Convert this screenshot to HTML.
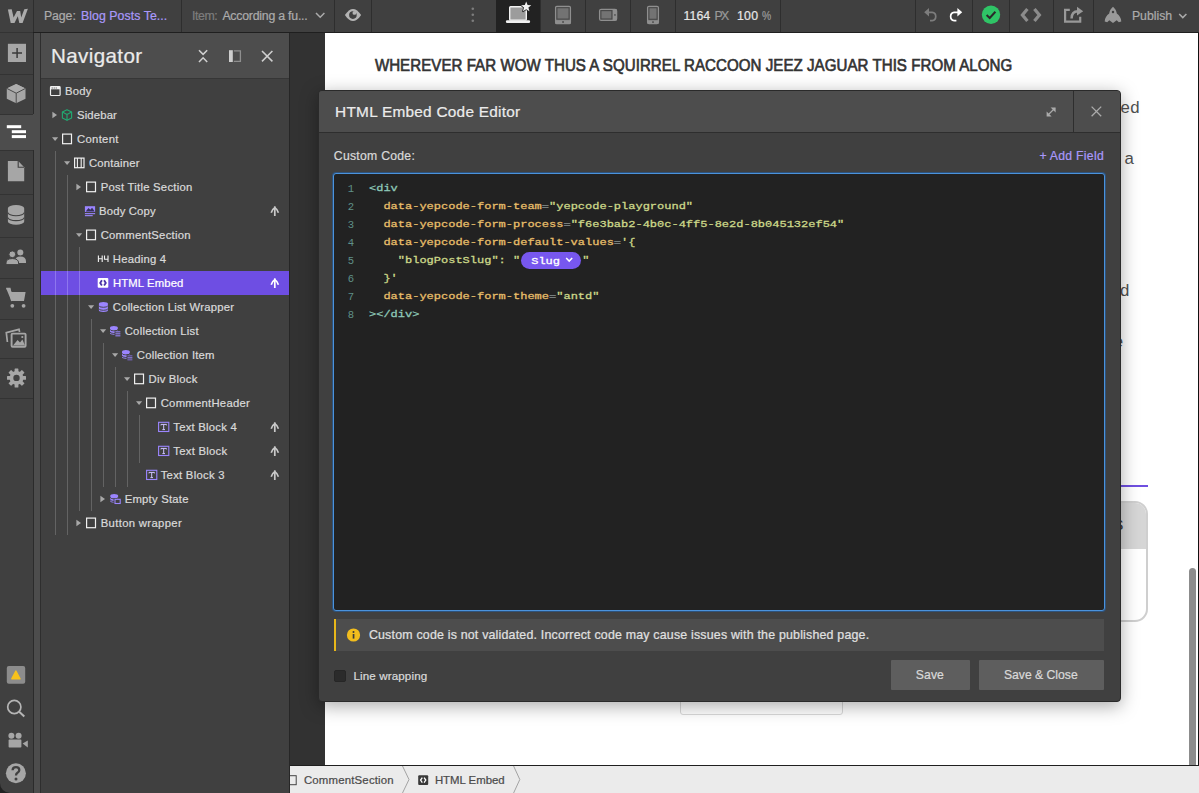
<!DOCTYPE html>
<html><head><meta charset="utf-8"><style>
*{box-sizing:border-box;margin:0;padding:0}
html,body{width:1199px;height:793px;overflow:hidden;background:#323232;font-family:"Liberation Sans",sans-serif}
body{position:relative}
.a{position:absolute}
.t{position:absolute;white-space:pre;line-height:20px;height:20px;-webkit-text-stroke:0.22px}
#page .t{-webkit-text-stroke:0}
svg{position:absolute;left:0;top:0;overflow:visible}
#topbar{position:absolute;left:0;top:0;width:1199px;height:33px;background:#404040;border-bottom:1px solid #1f1f1f}
.sep{position:absolute;top:0;width:1px;height:32px;background:#2e2e2e}
#rail{position:absolute;left:0;top:32px;width:34px;height:761px;background:#404040;border-right:1px solid #2b2b2b}
.rdiv{position:absolute;left:0;width:33px;height:1px;background:#333}
#strip{position:absolute;left:34px;top:32px;width:6px;height:761px;background:#4d4d4d}
#stripb{position:absolute;left:40px;top:32px;width:1px;height:761px;background:#2e2e2e}
#nav{position:absolute;left:41px;top:32px;width:248px;height:761px;background:#404040}
#navedge{position:absolute;left:289px;top:32px;width:1px;height:761px;background:#262626}
#navhead{position:absolute;left:0;top:1px;width:248px;height:45.5px;background:#4d4d4d;border-bottom:1px solid #363636}
.sel{position:absolute;left:41px;top:271px;width:248px;height:24px;background:#6e4ee3}
.guide{position:absolute;width:1px;background:#636363}
#page{position:absolute;left:325px;top:32px;width:873px;height:733px;background:#fff;overflow:hidden}
#pedge{position:absolute;left:1198px;top:32px;width:1px;height:761px;background:#111}
#crumbs{position:absolute;left:290px;top:765px;width:909px;height:28px;background:#ebebeb;border-top:1px solid #1f1f1f}
#modal{position:absolute;left:318px;top:90px;width:803px;height:612px;background:#404040;border-radius:4px;border:1px solid #2a2a2a;box-shadow:0 4px 18px rgba(0,0,0,.34)}
#mhead{position:absolute;left:0;top:0;width:801px;height:42px;background:#4d4d4d;border-bottom:1px solid #2e2e2e;border-radius:3px 3px 0 0}
#code{position:absolute;left:333px;top:173px;width:772px;height:438px;background:#222;border:1px solid #4b93dc;border-radius:3px;box-shadow:0 0 0 1px rgba(30,100,180,.5)}
.ln{position:absolute;left:340px;width:14px;text-align:right;font-family:"Liberation Mono",monospace;font-size:10.6px;color:#5f9088;line-height:18px;height:18px;transform:scaleY(1.04);transform-origin:0 11.83px}
.cl{position:absolute;font-family:"Liberation Mono",monospace;font-size:12px;font-weight:normal;-webkit-text-stroke:0.35px;transform:scaleY(0.75);transform-origin:0 12.2px;line-height:18px;height:18px;white-space:pre;color:#e8bf6a}
.cl i{font-style:normal}
.tg{color:#8ec9b8}.eq{color:#8c9494}.st{color:#cdd98a}
#notice{position:absolute;left:334px;top:619px;width:770px;height:32px;background:#4d4d4d;border-left:2px solid #e8b71a}
.btn{position:absolute;top:660px;height:30px;background:#5e5e5e;border-radius:1px}
#pill{position:absolute;left:520.5px;top:252px;width:60.5px;height:16.5px;border-radius:9px;background:#7757ee}
</style></head><body>
<div id="page">
<div class="t" style="left:795.6px;top:66px;font-size:16.8px;color:#505050;letter-spacing:.2px">ed</div>
<div class="t" style="left:799.4px;top:117px;font-size:16.8px;color:#505050">a</div>
<div class="t" style="left:795px;top:249px;font-size:16.8px;color:#505050">d</div>
<div class="t" style="left:780.3px;top:300px;font-size:16.8px;color:#505050">ce</div>
<div class="a" style="left:0;top:452.7px;width:823px;height:2px;background:#6f4fe0"></div>
<div class="a" style="left:500px;top:469px;width:323px;height:121px;border:2px solid #cfcfcf;border-radius:13px;overflow:hidden"><div style="height:45.5px;background:#d6d6d6"></div></div>
<div class="t" style="left:789.6px;top:482px;font-size:17.5px;color:#3a3a3a">s</div>
<div class="a" style="left:355px;top:640px;width:163px;height:43px;border:1px solid #d9d9d9;border-radius:3px"></div>
<div class="a" style="left:458.5px;top:664px;width:1.2px;height:6px;background:#444"></div>
<div class="a" style="left:864px;top:536px;width:7px;height:200px;border-radius:4px;background:#8c8c8c"></div>
</div>
<div id="pedge"></div>
<div id="crumbs"></div>
<svg width="1199" height="793"><g fill="none" stroke="#a3a3a3" stroke-width="1"><path d="M402.5,766 L409,779.5 L402.5,793"/><path d="M513.6,766 L519.8,779.5 L513.6,793"/></g><rect x="289.2" y="775.7" width="7" height="9" fill="none" stroke="#444" stroke-width="1"/><rect x="418.2" y="775.2" width="10" height="9.8" rx="1" fill="#3a3a3a"/><path d="M422.3,777.6 L420.6,780.1 L422.3,782.6 M424.1,777.6 L425.8,780.1 L424.1,782.6" stroke="#fff" stroke-width="1.3" fill="none"/></svg>
<div id="rail"></div><div id="strip"></div><div id="stripb"></div>
<div class="a" style="left:0;top:114px;width:40px;height:36px;background:#4d4d4d"></div>
<div class="rdiv" style="top:74px"></div>
<div class="rdiv" style="top:113.5px"></div>
<div class="rdiv" style="top:150px"></div>
<div class="rdiv" style="top:194px"></div>
<div class="rdiv" style="top:237px"></div>
<div class="rdiv" style="top:278px"></div>
<div class="rdiv" style="top:319px"></div>
<div class="rdiv" style="top:358px"></div>
<div class="rdiv" style="top:398px"></div>
<svg width="1199" height="793"><rect x="7.9" y="43.8" width="18.1" height="18.2" fill="#a6a6a6"/><path d="M12.1,52.95 H22 M17.1,47.9 V58" stroke="#3a3a3a" stroke-width="1.5"/><path d="M16.2,84 L25.5,88.4 V98.8 L16.2,103.3 L6.8,98.8 V88.4 Z" fill="#a6a6a6"/><path d="M16.2,84 L25.5,88.4 L16.2,93.2 L6.8,88.4 Z" fill="#adadad"/><path d="M6.8,88.4 L16.2,93.2 L25.5,88.4 M16.2,93.2 V103.3" stroke="#4a4a4a" stroke-width="1" fill="none"/><rect x="6.8" y="125.2" width="14.4" height="3" fill="#fff"/><rect x="11.8" y="130.2" width="14.2" height="3" fill="#fff"/><rect x="11.8" y="135.1" width="14.2" height="3" fill="#fff"/><path d="M7.9,161 H18.2 L24.2,167.2 V181.2 H7.9 Z" fill="#a6a6a6"/><path d="M18.2,161 V167.2 H24.2" stroke="#404040" stroke-width="1.1" fill="none"/><path d="M7.9,208.2 A8.15,3.2 0 0 1 24.2,208.2 V221.6 A8.15,3.2 0 0 1 7.9,221.6 Z" fill="#a6a6a6"/><path d="M7.9,212.6 A8.15,3.2 0 0 0 24.2,212.6 M7.9,217.4 A8.15,3.2 0 0 0 24.2,217.4" stroke="#404040" stroke-width="1.1" fill="none"/><circle cx="20.3" cy="252.4" r="3" fill="#a6a6a6"/><path d="M15,263 V261.6 Q15,256.6 20.3,256.6 Q26,256.6 26,261.6 V263 Z" fill="#a6a6a6"/><circle cx="12.3" cy="254.3" r="3.4" fill="#a6a6a6" stroke="#404040" stroke-width="1"/><path d="M6,264.6 V263 Q6,258.6 12.3,258.6 Q18.6,258.6 18.6,263 V264.6 Z" fill="#a6a6a6" stroke="#404040" stroke-width="1"/><path d="M6.2,288.5 H10.2 L11.6,292 H25.6 L24,301 H11.4 Z" fill="#a6a6a6"/><path d="M6.2,288.5 H9.8 L11.8,301" stroke="#a6a6a6" stroke-width="1.6" fill="none"/><circle cx="12.3" cy="305.8" r="1.9" fill="#a6a6a6"/><circle cx="23.6" cy="305.8" r="1.9" fill="#a6a6a6"/><path d="M7.4,342 L6.3,332.6 L19,329.4 L19.6,332" stroke="#a6a6a6" stroke-width="1.7" fill="none"/><rect x="11.6" y="333.6" width="14" height="13.2" rx="1" fill="none" stroke="#a6a6a6" stroke-width="1.9"/><path d="M13,345.6 L17.6,340 L20,342.6 L22.4,339.6 L25,345.6 Z" fill="#a6a6a6"/><circle cx="22.3" cy="337" r="1.1" fill="#a6a6a6"/><rect x="14.6" y="368.4" width="3.8" height="19" rx="0.5" fill="#a6a6a6" transform="rotate(0 16.5 377.9)"/><rect x="14.6" y="368.4" width="3.8" height="19" rx="0.5" fill="#a6a6a6" transform="rotate(45 16.5 377.9)"/><rect x="14.6" y="368.4" width="3.8" height="19" rx="0.5" fill="#a6a6a6" transform="rotate(90 16.5 377.9)"/><rect x="14.6" y="368.4" width="3.8" height="19" rx="0.5" fill="#a6a6a6" transform="rotate(135 16.5 377.9)"/><circle cx="16.5" cy="377.9" r="6.9" fill="#a6a6a6"/><circle cx="16.5" cy="377.9" r="3.2" fill="#404040"/><rect x="6.8" y="666.1" width="18.4" height="17.7" rx="2" fill="#8c8c8c"/><path d="M15.9,671 L20,678.8 H11.8 Z" fill="#f8c21c" stroke="#f8c21c" stroke-width="1.4" stroke-linejoin="round"/><circle cx="14.3" cy="707" r="6.6" fill="none" stroke="#b5b5b5" stroke-width="1.7"/><path d="M19.2,711.8 L24.3,716.6" stroke="#b5b5b5" stroke-width="2"/><circle cx="11.4" cy="735.8" r="3" fill="#a6a6a6"/><circle cx="18.6" cy="735.8" r="3" fill="#a6a6a6"/><rect x="8.6" y="739.6" width="12.8" height="8" rx="0.8" fill="#a6a6a6"/><path d="M22.6,743.6 L27.8,740.6 V747.4 Z" fill="#a6a6a6"/><circle cx="15.9" cy="773.2" r="10" fill="#a6a6a6"/><path d="M12.6,770.3 Q12.6,767.2 16,767.2 Q19.3,767.2 19.3,770 Q19.3,771.8 17.5,772.8 Q16,773.7 16,775.6" fill="none" stroke="#404040" stroke-width="2.3"/><circle cx="16" cy="779" r="1.5" fill="#404040"/></svg>
<div id="nav"><div id="navhead"></div></div><div id="navedge"></div>
<div class="sel"></div>
<div class="guide" style="left:55.0px;top:151px;height:384px"></div>
<div class="guide" style="left:55.0px;top:271px;height:24px;background:#8e76ee"></div>
<div class="guide" style="left:67.0px;top:175px;height:360px"></div>
<div class="guide" style="left:67.0px;top:271px;height:24px;background:#8e76ee"></div>
<div class="guide" style="left:79.0px;top:247px;height:264px"></div>
<div class="guide" style="left:79.0px;top:271px;height:24px;background:#8e76ee"></div>
<div class="guide" style="left:91.0px;top:319px;height:192px"></div>
<div class="guide" style="left:103.0px;top:343px;height:144px"></div>
<div class="guide" style="left:115.0px;top:367px;height:120px"></div>
<div class="guide" style="left:127.0px;top:391px;height:96px"></div>
<div class="guide" style="left:139.0px;top:415px;height:48px"></div>
<svg width="1199" height="793"><g fill="none" stroke="#cfcfcf" stroke-width="1.55"><path d="M199,50.2 L203.1,54.4 L207.2,50.2 M199,62 L203.1,57.8 L207.2,62"/><path d="M262,51 L272.4,61.4 M272.4,51 L262,61.4"/></g><rect x="229" y="50.2" width="3.8" height="11.8" fill="#cfcfcf"/><path d="M233.8,50.8 H240.4 V61.4 H233.8" fill="none" stroke="#8f8f8f" stroke-width="1.3"/></svg>
<svg width="1199" height="793"><rect x="50.5" y="86.7" width="9.6" height="8.8" rx="0.8" fill="none" stroke="#f0f0f0" stroke-width="1.2"/><rect x="50.5" y="86.7" width="9.6" height="2.6" fill="#f0f0f0"/><rect x="51.7" y="87.5" width="1" height="1" fill="#404040"/><rect x="53.7" y="87.5" width="1" height="1" fill="#404040"/><rect x="55.7" y="87.5" width="1" height="1" fill="#404040"/><path d="M52.4,111.7 L57.0,115 L52.4,118.3 Z" fill="#a8a8a8"/><g fill="none" stroke="#22a871" stroke-width="1.15" stroke-linejoin="round"><path d="M67,109.8 L71.6,112.1 V117.9 L67,120.3 L62.4,117.9 V112.1 Z"/><path d="M62.4,112.1 L67,114.5 L71.6,112.1 M67,114.5 V120.3"/></g><path d="M52,137.2 L58.2,137.2 L55.1,141 Z" fill="#a8a8a8"/><rect x="62.6" y="134.1" width="8.9" height="9.6" fill="none" stroke="#f0f0f0" stroke-width="1.2"/><path d="M64,161.2 L70.2,161.2 L67.1,165 Z" fill="#a8a8a8"/><rect x="74.6" y="158.1" width="9.4" height="9.6" fill="none" stroke="#f0f0f0" stroke-width="1.2"/><path d="M77.4,158.1 V167.7 M81.2,158.1 V167.7" stroke="#f0f0f0" stroke-width="1.1"/><path d="M76.4,183.7 L81.0,187 L76.4,190.3 Z" fill="#a8a8a8"/><rect x="86.6" y="182.1" width="8.9" height="9.6" fill="none" stroke="#f0f0f0" stroke-width="1.2"/><rect x="84.9" y="206.2" width="10.2" height="5.8" fill="#9b85ff"/><path d="M85.7,211.4 L88.5,208 L90.3,209.8 L92.1,207.8 L94.7,211.4 Z" fill="#35305a"/><rect x="84.9" y="213.1" width="10.2" height="1.1" fill="#9b85ff"/><rect x="84.9" y="215.1" width="7.8" height="1.1" fill="#9b85ff"/><g fill="none" stroke="#c9c9c9" stroke-width="1.7"><path d="M274.8,206.3 V216"/><path d="M271.2,212.7 Q272.2,209.4 274.8,207.8 Q277.40000000000003,209.4 278.40000000000003,212.7"/></g><path d="M76,233.2 L82.2,233.2 L79.1,237 Z" fill="#a8a8a8"/><rect x="86.6" y="230.1" width="8.9" height="9.6" fill="none" stroke="#f0f0f0" stroke-width="1.2"/><g fill="none" stroke="#f2f2f2" stroke-width="1.1"><path d="M98.4,255.5 V262.1 M102.2,255.5 V262.1 M98.4,258.8 H102.2"/><path d="M104.5,255.5 V259.2 H108 M108,255.5 V262.1"/></g><rect x="97.7" y="278" width="10.6" height="9.8" rx="1" fill="#fff"/><path d="M101.9,280.2 L100.2,282.9 L101.9,285.6 M104.1,280.2 L105.8,282.9 L104.1,285.6" stroke="#4a32a8" stroke-width="1.8" fill="none"/><g fill="none" stroke="#fff" stroke-width="1.7"><path d="M274.8,278.3 V288"/><path d="M271.2,284.7 Q272.2,281.4 274.8,279.8 Q277.40000000000003,281.4 278.40000000000003,284.7"/></g><path d="M88,305.2 L94.2,305.2 L91.1,309 Z" fill="#a8a8a8"/><path d="M98.9,303.7 A4.5,1.7 0 0 1 107.9,303.7 V310.3 A4.5,1.7 0 0 1 98.9,310.3 Z" fill="#9b85ff"/><path d="M98.9,305.6 A4.5,1.7 0 0 0 107.9,305.6" fill="none" stroke="#404040" stroke-width="0.9"/><path d="M98.9,308.6 A4.5,1.7 0 0 0 107.9,308.6" fill="none" stroke="#404040" stroke-width="0.9"/><path d="M100,329.2 L106.2,329.2 L103.1,333 Z" fill="#a8a8a8"/><path d="M110.0,327.79999999999995 A3.9,1.7 0 0 1 117.80000000000001,327.79999999999995 V333.0 A3.9,1.7 0 0 1 110.0,333.0 Z" fill="#9b85ff"/><path d="M110.0,329.19599999999997 A3.9,1.7 0 0 0 117.80000000000001,329.19599999999997" fill="none" stroke="#404040" stroke-width="0.9"/><path d="M110.0,331.77599999999995 A3.9,1.7 0 0 0 117.80000000000001,331.77599999999995" fill="none" stroke="#404040" stroke-width="0.9"/><rect x="114.6" y="330.4" width="6" height="5.8" fill="#404040"/><rect x="115.4" y="331.3" width="5" height="1.05" fill="#9b85ff"/><rect x="115.4" y="333.3" width="5" height="1.05" fill="#9b85ff"/><rect x="115.4" y="335.3" width="5" height="1.05" fill="#9b85ff"/><path d="M112,353.2 L118.2,353.2 L115.1,357 Z" fill="#a8a8a8"/><path d="M122.0,351.79999999999995 A3.9,1.7 0 0 1 129.8,351.79999999999995 V357.0 A3.9,1.7 0 0 1 122.0,357.0 Z" fill="#9b85ff"/><path d="M122.0,353.19599999999997 A3.9,1.7 0 0 0 129.8,353.19599999999997" fill="none" stroke="#404040" stroke-width="0.9"/><path d="M122.0,355.77599999999995 A3.9,1.7 0 0 0 129.8,355.77599999999995" fill="none" stroke="#404040" stroke-width="0.9"/><rect x="126.6" y="354.4" width="6" height="5.8" fill="#404040"/><rect x="127.4" y="355.3" width="5" height="1.05" fill="#7a68c8"/><rect x="127.4" y="357.3" width="5" height="1.05" fill="#9b85ff"/><rect x="127.4" y="359.3" width="5" height="1.05" fill="#7a68c8"/><path d="M124,377.2 L130.2,377.2 L127.1,381 Z" fill="#a8a8a8"/><rect x="134.6" y="374.1" width="8.9" height="9.6" fill="none" stroke="#f0f0f0" stroke-width="1.2"/><path d="M136,401.2 L142.2,401.2 L139.1,405 Z" fill="#a8a8a8"/><rect x="146.6" y="398.1" width="8.9" height="9.6" fill="none" stroke="#f0f0f0" stroke-width="1.2"/><rect x="158.6" y="422.3" width="10.2" height="9.2" fill="none" stroke="#9b85ff" stroke-width="1.1"/><path d="M161,425.4 V424.4 H166.4 V425.4 M163.7,424.4 V429.6 M162.4,429.6 H165" stroke="#cfc4ff" stroke-width="1" fill="none"/><g fill="none" stroke="#c9c9c9" stroke-width="1.7"><path d="M274.8,422.3 V432"/><path d="M271.2,428.7 Q272.2,425.4 274.8,423.8 Q277.40000000000003,425.4 278.40000000000003,428.7"/></g><rect x="158.6" y="446.3" width="10.2" height="9.2" fill="none" stroke="#9b85ff" stroke-width="1.1"/><path d="M161,449.4 V448.4 H166.4 V449.4 M163.7,448.4 V453.6 M162.4,453.6 H165" stroke="#cfc4ff" stroke-width="1" fill="none"/><g fill="none" stroke="#c9c9c9" stroke-width="1.7"><path d="M274.8,446.3 V456"/><path d="M271.2,452.7 Q272.2,449.4 274.8,447.8 Q277.40000000000003,449.4 278.40000000000003,452.7"/></g><rect x="146.6" y="470.3" width="10.2" height="9.2" fill="none" stroke="#9b85ff" stroke-width="1.1"/><path d="M149,473.4 V472.4 H154.4 V473.4 M151.7,472.4 V477.6 M150.4,477.6 H153" stroke="#cfc4ff" stroke-width="1" fill="none"/><g fill="none" stroke="#c9c9c9" stroke-width="1.7"><path d="M274.8,470.3 V480"/><path d="M271.2,476.7 Q272.2,473.4 274.8,471.8 Q277.40000000000003,473.4 278.40000000000003,476.7"/></g><path d="M100.4,495.7 L105.0,499 L100.4,502.3 Z" fill="#a8a8a8"/><path d="M110.3,495.79999999999995 A3.9,1.7 0 0 1 118.10000000000001,495.79999999999995 V501.0 A3.9,1.7 0 0 1 110.3,501.0 Z" fill="#9b85ff"/><path d="M110.3,497.19599999999997 A3.9,1.7 0 0 0 118.10000000000001,497.19599999999997" fill="none" stroke="#404040" stroke-width="0.9"/><path d="M110.3,499.77599999999995 A3.9,1.7 0 0 0 118.10000000000001,499.77599999999995" fill="none" stroke="#404040" stroke-width="0.9"/><rect x="113.6" y="498.2" width="7.6" height="6.4" fill="#404040"/><rect x="115" y="499.3" width="5.2" height="4.2" fill="none" stroke="#9b85ff" stroke-width="1.1"/><path d="M76.4,519.7 L81.0,523 L76.4,526.3 Z" fill="#a8a8a8"/><rect x="86.6" y="518.1" width="8.9" height="9.6" fill="none" stroke="#f0f0f0" stroke-width="1.2"/></svg>
<div id="topbar"></div>
<div class="a" style="left:496px;top:0;width:44px;height:32px;background:#222"></div><div class="a" style="left:0;top:32px;width:33px;height:1px;background:#333"></div>
<div class="sep" style="left:33px"></div>
<div class="sep" style="left:181px"></div>
<div class="sep" style="left:334px"></div>
<div class="sep" style="left:370.5px"></div>
<div class="sep" style="left:540px"></div>
<div class="sep" style="left:585px"></div>
<div class="sep" style="left:630px"></div>
<div class="sep" style="left:675px"></div>
<div class="sep" style="left:780px"></div>
<div class="sep" style="left:915px"></div>
<div class="sep" style="left:972px"></div>
<div class="sep" style="left:1009px"></div>
<div class="sep" style="left:1052.5px"></div>
<div class="sep" style="left:1093px"></div>
<svg width="1199" height="793"><path d="M7.9,9.6 L11.7,9.2 L13.6,17.6 L17,10.9 L20.2,11.1 L21.2,17.6 L24.3,9.2 L27.9,8.8 L22.6,22.9 L19.3,22.9 L17.8,16.2 L14.5,22.9 L10.7,22.9 Z" fill="#ababab"/><path d="M316,13 L320.2,17.2 L324.4,13" fill="none" stroke="#ababab" stroke-width="1.5"/><path d="M344.9,15 C347.6,10.8 350.3,8.9 353,8.9 C355.7,8.9 358.4,10.8 361.1,15 C358.4,19.2 355.7,21 353,21 C350.3,21 347.6,19.2 344.9,15 Z" fill="#b3b3b3"/><circle cx="352.9" cy="15.1" r="3.8" fill="#404040"/><circle cx="354.4" cy="12.9" r="1.9" fill="#b3b3b3"/><circle cx="472.8" cy="8.7" r="1.3" fill="#7d7d7d"/><circle cx="472.8" cy="14.8" r="1.3" fill="#7d7d7d"/><circle cx="472.8" cy="20.8" r="1.3" fill="#7d7d7d"/><rect x="509.7" y="6.7" width="16.6" height="13.4" rx="0.8" fill="#9c9c9c" stroke="#f2f2f2" stroke-width="1.4"/><rect x="505.9" y="20.2" width="24.2" height="2.8" rx="1.2" fill="#f2f2f2"/><path d="M526.2,1.5 L527.6,5.0 L531.3,5.2 L528.4,7.6 L529.4,11.3 L526.2,9.2 L523.0,11.3 L524.0,7.6 L521.1,5.2 L524.8,5.0 Z" fill="#f2f2f2" stroke="#222" stroke-width="1.6" paint-order="stroke" stroke-linejoin="round"/><rect x="555.6" y="6.4" width="14.8" height="17.2" rx="1.2" fill="#737373" stroke="#8f8f8f" stroke-width="1.3"/><rect x="555.6" y="20.2" width="14.8" height="3.6" fill="#8f8f8f"/><rect x="562.2" y="21.2" width="1.7" height="1.6" fill="#4a4a4a"/><rect x="556.9" y="7.7" width="12.2" height="11.4" fill="none" stroke="#474747" stroke-width="1.1"/><rect x="599.6" y="9.3" width="17" height="11" rx="1.6" fill="#737373" stroke="#8f8f8f" stroke-width="1.3"/><rect x="612.6" y="9.3" width="4" height="11" fill="#8f8f8f"/><rect x="614.2" y="14.2" width="1.5" height="1.5" fill="#4a4a4a"/><rect x="600.9" y="10.6" width="11" height="8.4" fill="none" stroke="#474747" stroke-width="1.1"/><rect x="647.6" y="6.4" width="10.8" height="17.2" rx="1.4" fill="#737373" stroke="#8f8f8f" stroke-width="1.3"/><rect x="647.6" y="20.4" width="10.8" height="3.4" fill="#8f8f8f"/><rect x="652.2" y="21.3" width="1.6" height="1.6" fill="#4a4a4a"/><rect x="648.9" y="7.7" width="8.2" height="11.6" fill="none" stroke="#474747" stroke-width="1.1"/><path d="M927,12.3 H932.2 A4.2,4.2 0 0 1 932.2,20.6 H930" fill="none" stroke="#7d7d7d" stroke-width="1.7"/><path d="M924.2,12.3 L929,8 V16.6 Z" fill="#7d7d7d"/><path d="M959.4,12.3 H954.2 A4.2,4.2 0 0 0 954.2,20.6 H956.4" fill="none" stroke="#fff" stroke-width="1.7"/><path d="M962.2,12.3 L957.4,8 V16.6 Z" fill="#fff"/><circle cx="991" cy="14.8" r="9.2" fill="#2fc466"/><path d="M986.6,15 L989.7,18 L995.4,11.8" fill="none" stroke="#2a2a2a" stroke-width="2"/><path d="M1027.4,8.9 L1022.4,15 L1027.4,21.1 M1034.4,8.9 L1039.4,15 L1034.4,21.1" fill="none" stroke="#8c8c8c" stroke-width="3.2"/><path d="M1069.8,9.9 H1065.1 V21.6 H1080.2 V16.8" fill="none" stroke="#999" stroke-width="2.2"/><path d="M1071.6,18.6 C1071.6,13.6 1074.4,11.3 1078,11.3" fill="none" stroke="#999" stroke-width="2.5"/><path d="M1077,6.8 L1083.2,11.3 L1077,15.6 Z" fill="#999"/><path d="M1113,6.8 C1115,8.6 1116.6,11 1116.8,13.6 C1119.4,15.6 1121.2,18 1121.3,21.6 L1118.8,22.3 L1116.7,20.2 L1113,23 L1109.3,20.2 L1107.2,22.3 L1104.7,21.6 C1104.8,18 1106.6,15.6 1109.2,13.6 C1109.4,11 1111,8.6 1113,6.8 Z" fill="#999"/><circle cx="1113" cy="11.9" r="1.25" fill="#404040"/><path d="M1179.2,14 L1182.8,17.6 L1186.4,14" fill="none" stroke="#ababab" stroke-width="1.5"/></svg>
<div id="modal"><div id="mhead"></div></div>
<div class="a" style="left:1073px;top:91px;width:1px;height:41px;background:#2e2e2e"></div>
<div id="code"></div>
<div class="ln" style="top:179.65px">1</div>
<div class="ln" style="top:197.65px">2</div>
<div class="ln" style="top:215.65px">3</div>
<div class="ln" style="top:233.65px">4</div>
<div class="ln" style="top:251.65px">5</div>
<div class="ln" style="top:269.65px">6</div>
<div class="ln" style="top:287.65px">7</div>
<div class="ln" style="top:305.65px">8</div>
<div class="cl" style="left:369.0px;top:178.9px"><i class="tg">&lt;div</i></div>
<div class="cl" style="left:383.4px;top:196.9px">data-yepcode-form-team<i class="eq">=</i><i class="st">"yepcode-playground"</i></div>
<div class="cl" style="left:383.4px;top:214.9px">data-yepcode-form-process<i class="eq">=</i><i class="st">"f6e3bab2-4b0c-4ff5-8e2d-8b045132ef54"</i></div>
<div class="cl" style="left:383.4px;top:232.9px">data-yepcode-form-default-values<i class="eq">=</i><i class="st">'{</i></div>
<div class="cl" style="left:397.8px;top:250.9px"><i class="st">"blogPostSlug": "</i></div>
<div class="cl" style="left:383.4px;top:268.9px"><i class="st">}'</i></div>
<div class="cl" style="left:383.4px;top:286.9px">data-yepcode-form-theme<i class="eq">=</i><i class="st">"antd"</i></div>
<div class="cl" style="left:369.0px;top:304.9px"><i class="tg">&gt;&lt;/div&gt;</i></div>
<div id="pill"></div>
<div class="cl" style="left:531.2px;top:251.5px;color:#fff">Slug</div>
<div class="cl" style="left:582.2px;top:250.9px"><i class="st">"</i></div>
<div id="notice"></div>
<div class="a" style="left:334px;top:670px;width:12.2px;height:12.2px;background:#2b2b2b;border:1px solid #262626;border-radius:2px"></div>
<div class="btn" style="left:891px;width:78.5px"></div><div class="btn" style="left:978.5px;width:125px"></div>
<svg width="1199" height="793"><path d="M1047.4,115.6 L1054.8,108.2" stroke="#ababab" stroke-width="1.3"/><path d="M1050.6,107.4 H1055.6 V112.4 Z" fill="#ababab"/><path d="M1046.6,111.6 V116.6 H1051.6 Z" fill="#ababab"/><path d="M1091.6,106.6 L1101.2,116.2 M1101.2,106.6 L1091.6,116.2" stroke="#ababab" stroke-width="1.3"/><path d="M566.2,258 L569.2,261.1 L572.2,258" fill="none" stroke="#fff" stroke-width="1.5"/><circle cx="353.5" cy="635" r="6.6" fill="#f2bd1d"/><rect x="352.7" y="634" width="1.7" height="4.6" fill="#3a3a3a"/><circle cx="353.5" cy="632" r="1" fill="#3a3a3a"/></svg>
<div class="t" style="left:44.00px;top:5.64px;font-size:12.3px;color:#ababab;letter-spacing:-0.085px;font-family:'Liberation Sans',sans-serif;">Page:</div>
<div class="t" style="left:80.90px;top:5.64px;font-size:12.3px;color:#a998fa;letter-spacing:0.072px;font-family:'Liberation Sans',sans-serif;">Blog Posts Te...</div>
<div class="t" style="left:191.90px;top:5.64px;font-size:12.3px;color:#7d7d7d;letter-spacing:-0.386px;font-family:'Liberation Sans',sans-serif;">Item:</div>
<div class="t" style="left:222.40px;top:5.64px;font-size:12.3px;color:#ababab;letter-spacing:-0.222px;font-family:'Liberation Sans',sans-serif;">According a fu...</div>
<div class="t" style="left:683.40px;top:5.64px;font-size:12.3px;color:#e6e6e6;letter-spacing:0.116px;font-family:'Liberation Sans',sans-serif;">1164</div>
<div class="t" style="left:714.40px;top:5.64px;font-size:12.3px;color:#999;letter-spacing:-1.606px;font-family:'Liberation Sans',sans-serif;">PX</div>
<div class="t" style="left:736.90px;top:5.64px;font-size:12.3px;color:#e6e6e6;letter-spacing:0.384px;font-family:'Liberation Sans',sans-serif;">100</div>
<div class="t" style="left:762.40px;top:5.64px;font-size:12.3px;color:#999;letter-spacing:0.000px;font-family:'Liberation Sans',sans-serif;;transform:scaleX(0.841);transform-origin:0 0">%</div>
<div class="t" style="left:1131.90px;top:5.64px;font-size:12.3px;color:#ababab;letter-spacing:-0.007px;font-family:'Liberation Sans',sans-serif;">Publish</div>
<div class="t" style="left:50.90px;top:45.86px;font-size:20.6px;color:#ebebeb;letter-spacing:0.395px;font-family:'Liberation Sans',sans-serif;">Navigator</div>
<div class="t" style="left:65.00px;top:80.88px;font-size:11.3px;color:#d9d9d9;letter-spacing:0.217px;font-family:'Liberation Sans',sans-serif;">Body</div>
<div class="t" style="left:77.00px;top:104.88px;font-size:11.3px;color:#d9d9d9;letter-spacing:0.158px;font-family:'Liberation Sans',sans-serif;">Sidebar</div>
<div class="t" style="left:77.00px;top:128.88px;font-size:11.3px;color:#d9d9d9;letter-spacing:0.304px;font-family:'Liberation Sans',sans-serif;">Content</div>
<div class="t" style="left:88.90px;top:152.88px;font-size:11.3px;color:#d9d9d9;letter-spacing:0.214px;font-family:'Liberation Sans',sans-serif;">Container</div>
<div class="t" style="left:100.70px;top:176.88px;font-size:11.3px;color:#d9d9d9;letter-spacing:0.254px;font-family:'Liberation Sans',sans-serif;">Post Title Section</div>
<div class="t" style="left:99.00px;top:200.88px;font-size:11.3px;color:#d9d9d9;letter-spacing:0.179px;font-family:'Liberation Sans',sans-serif;">Body Copy</div>
<div class="t" style="left:100.70px;top:224.88px;font-size:11.3px;color:#d9d9d9;letter-spacing:0.242px;font-family:'Liberation Sans',sans-serif;">CommentSection</div>
<div class="t" style="left:112.80px;top:248.88px;font-size:11.3px;color:#d9d9d9;letter-spacing:0.223px;font-family:'Liberation Sans',sans-serif;">Heading 4</div>
<div class="t" style="left:112.90px;top:272.88px;font-size:11.3px;color:#fff;letter-spacing:0.137px;font-family:'Liberation Sans',sans-serif;">HTML Embed</div>
<div class="t" style="left:112.80px;top:296.88px;font-size:11.3px;color:#d9d9d9;letter-spacing:0.206px;font-family:'Liberation Sans',sans-serif;">Collection List Wrapper</div>
<div class="t" style="left:124.70px;top:320.88px;font-size:11.3px;color:#d9d9d9;letter-spacing:0.255px;font-family:'Liberation Sans',sans-serif;">Collection List</div>
<div class="t" style="left:136.80px;top:344.88px;font-size:11.3px;color:#d9d9d9;letter-spacing:0.213px;font-family:'Liberation Sans',sans-serif;">Collection Item</div>
<div class="t" style="left:148.60px;top:368.88px;font-size:11.3px;color:#d9d9d9;letter-spacing:0.201px;font-family:'Liberation Sans',sans-serif;">Div Block</div>
<div class="t" style="left:160.70px;top:392.88px;font-size:11.3px;color:#d9d9d9;letter-spacing:0.256px;font-family:'Liberation Sans',sans-serif;">CommentHeader</div>
<div class="t" style="left:173.30px;top:416.88px;font-size:11.3px;color:#d9d9d9;letter-spacing:0.227px;font-family:'Liberation Sans',sans-serif;">Text Block 4</div>
<div class="t" style="left:173.30px;top:440.88px;font-size:11.3px;color:#d9d9d9;letter-spacing:0.257px;font-family:'Liberation Sans',sans-serif;">Text Block</div>
<div class="t" style="left:160.70px;top:464.88px;font-size:11.3px;color:#d9d9d9;letter-spacing:0.263px;font-family:'Liberation Sans',sans-serif;">Text Block 3</div>
<div class="t" style="left:124.70px;top:488.88px;font-size:11.3px;color:#d9d9d9;letter-spacing:0.225px;font-family:'Liberation Sans',sans-serif;">Empty State</div>
<div class="t" style="left:100.70px;top:512.88px;font-size:11.3px;color:#d9d9d9;letter-spacing:0.337px;font-family:'Liberation Sans',sans-serif;">Button wrapper</div>
<div class="t" style="left:374.90px;top:55.77px;font-size:15.1px;color:#333;letter-spacing:0.041px;font-family:'Liberation Sans',sans-serif;-webkit-text-stroke:0.6px #333;transform:scaleY(1.145);transform-origin:0 15.23px">WHEREVER FAR WOW THUS A SQUIRREL RACCOON JEEZ JAGUAR THIS FROM ALONG</div>
<div class="t" style="left:335.10px;top:101.66px;font-size:15.4px;color:#ebebeb;letter-spacing:0.247px;font-family:'Liberation Sans',sans-serif;">HTML Embed Code Editor</div>
<div class="t" style="left:333.80px;top:145.67px;font-size:12.2px;color:#d9d9d9;letter-spacing:0.281px;font-family:'Liberation Sans',sans-serif;">Custom Code:</div>
<div class="t" style="left:1039.40px;top:145.67px;font-size:12.2px;color:#a998fa;letter-spacing:0.297px;font-family:'Liberation Sans',sans-serif;">+ Add Field</div>
<div class="t" style="left:368.90px;top:625.20px;font-size:12.4px;color:#e0e0e0;letter-spacing:0.197px;font-family:'Liberation Sans',sans-serif;">Custom code is not validated. Incorrect code may cause issues with the published page.</div>
<div class="t" style="left:353.40px;top:665.98px;font-size:11.6px;color:#d9d9d9;letter-spacing:0.133px;font-family:'Liberation Sans',sans-serif;">Line wrapping</div>
<div class="t" style="left:915.80px;top:664.77px;font-size:12.2px;color:#d9d9d9;letter-spacing:0.106px;font-family:'Liberation Sans',sans-serif;">Save</div>
<div class="t" style="left:1003.90px;top:664.77px;font-size:12.2px;color:#d9d9d9;letter-spacing:-0.004px;font-family:'Liberation Sans',sans-serif;">Save &amp; Close</div>
<div class="t" style="left:303.90px;top:769.95px;font-size:11.4px;color:#4a4a4a;letter-spacing:0.187px;font-family:'Liberation Sans',sans-serif;">CommentSection</div>
<div class="t" style="left:434.90px;top:769.95px;font-size:11.4px;color:#4a4a4a;letter-spacing:-0.005px;font-family:'Liberation Sans',sans-serif;">HTML Embed</div>
<svg width="1199" height="793"><path d="M0,783 A10,10 0 0 0 10,793 L0,793 Z" fill="#222"/></svg>
</body></html>
